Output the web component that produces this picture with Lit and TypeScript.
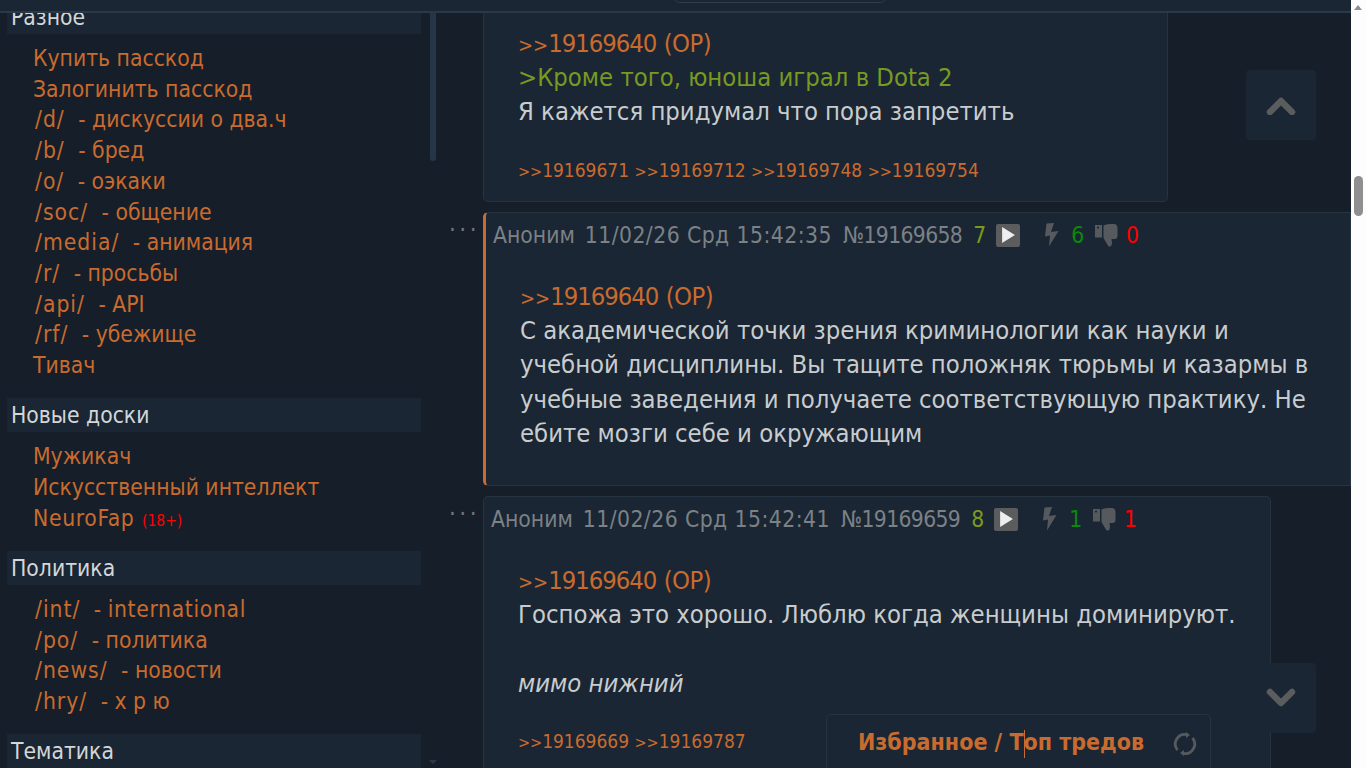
import { LitElement, html, css, svg } from 'lit';
import { customElement } from 'lit/decorators.js';

const groups = [
  { title: 'Разное', links: ['Купить пасскод', 'Залогинить пасскод', '/d/ - дискуссии о два.ч', '/b/ - бред', '/o/ - оэкаки', '/soc/ - общение', '/media/ - анимация', '/r/ - просьбы', '/api/ - API', '/rf/ - убежище', 'Тивач'] },
  { title: 'Новые доски', links: ['Мужикач', 'Искусственный интеллект', 'NeuroFap'] },
  { title: 'Политика', links: ['/int/ - international', '/po/ - политика', '/news/ - новости', '/hry/ - х р ю'] },
  { title: 'Тематика', links: [] },
];

const bolt = svg`<path d="M1.5.5L9 0 6 9l7.5-1L4 23.5l1-11-5 1z"/>`;
const thumb = svg`<path fill-rule="evenodd" d="M0 1h7v12.5H0zM3 2.5a1 1 0 1 0 .01 0z"/><path d="M8.5 1.5C11 0 14 0 19 0c2 0 3.5 1.500 3.500 4v8c0 2-1 3-3 3h-3l.5 4c0 3-2 4-3.500 3.500L8.500 14z"/>`;

@customElement('app-root')
export class AppRoot extends LitElement {
  static styles = css`
    :host {
      display: block;
      height: 768px;
      overflow: hidden;
      position: relative;
      background: #161f29;
      font-family: "DejaVu Sans Condensed", "DejaVu Sans", sans-serif;
      color: #c9ccce;
    }
    a { color: #c96b2e; text-decoration: none; }
    .layout { display: grid; grid-template-columns: 441px 1fr 15px; height: 768px; }
    .topbar {
      position: absolute; top: 0; left: 0; right: 15px; height: 11px;
      background: #1a2633; border-bottom: 2px solid #2a3847;
    }
    .topbar-tab {
      position: absolute; left: 674px; top: -8px; width: 210px; height: 9px;
      border: 1px solid #2f3d4c; border-radius: 6px;
    }
    .side { padding: 0 20px 0 7px; position: relative; overflow: hidden; }
    .side h3 {
      margin: 0; height: 34px; line-height: 34px; padding-left: 4px;
      font-size: 22.7px; font-weight: 400; background: #1a2633; color: #d4d6d8;
    }
    .side ul { list-style: none; margin: 0; padding: 9px 0 17.500px 26px; }
    .side li { font-size: 22.7px; line-height: 30.7px; white-space: nowrap; }
    .tag { margin: 0 7px 0 2px; letter-spacing: 1px; }
    .latin { letter-spacing: .65px; }
    .adult { color: #f00; font-size: 15.500px; line-height: 1; margin-left: 1px; }
    .side-thumb {
      position: absolute; left: 430px; top: 0; width: 6px; height: 161px;
      background: #253649; border-radius: 3px;
    }
    .side-arrow {
      position: absolute; left: 429px; top: 760px; width: 0; height: 0;
      border: 4px solid transparent; border-top: 4px solid #2b3a4b; border-bottom: 0;
    }
    .main { display: flex; flex-direction: column; gap: 10px; min-width: 0; }
    .row { display: flex; align-items: flex-start; }
    .dots {
      width: 42px; flex: none; margin-top: -1px; padding: 0 0 0 8px; box-sizing: border-box;
      color: #6f767c; font-size: 24px; line-height: 24px; letter-spacing: 3.500px;
    }
    .post {
      background: #1a2633; border: 1px solid #263442; border-radius: 5px;
      box-sizing: border-box; padding: 0 35px 32px 7px;
    }
    .first { height: 202px; width: 685px; border-top: 0; border-radius: 0 0 5px 5px; padding-top: 26px; margin-left: 42px; }
    .op { width: 868px; height: 274px; border-left: 3px solid #c96b2e; border-radius: 5px 0 0 5px; }
    .third { width: 788px; height: 400px; }
    .meta {
      display: flex; align-items: center; height: 44px;
      font-size: 22.7px; color: #7c8186; white-space: nowrap;
    }
    .date { margin-left: 10px; letter-spacing: .45px; }
    .num { margin-left: 11px; letter-spacing: -.65px; }
    .count { color: #7a9a1e; margin-left: 11px; }
    .play {
      width: 24px; height: 23px; background: #5a5c5e; border-radius: 2px; margin-left: 10px;
      display: flex; align-items: center; justify-content: center;
    }
    .play svg { fill: #eee; width: 13px; height: 16px; }
    .ico { fill: #565a5e; flex: none; }
    .bolt { width: 14px; height: 24px; margin-left: 25px; }
    .thumb { width: 23px; height: 23px; margin-left: 11px; }
    .g { color: #0a8a0a; margin-left: 12px; }
    .r { color: #f00; margin-left: 8px; }
    .body { padding: 22px 0 0 27px; }
    .first .body { padding-top: 0; }
    .body p { margin: 0; font-size: 25.400px; line-height: 34.200px; white-space: nowrap; }
    .gt { font-size: 20px; line-height: 1; }
    .ref { letter-spacing: -1px; }
    .op-mark { letter-spacing: -.5px; }
    .quote { color: #789922; }
    .replies { margin-top: 28.500px; font-size: 19px; line-height: 26px; color: #c96b2e; white-space: nowrap; }
    .replies .gt { font-size: 16px; }
    .float {
      position: absolute; left: 1246px; width: 70px; height: 70px;
      background: #1a2633; border-radius: 4px;
      display: flex; align-items: center; justify-content: center;
    }
    .float svg { width: 30px; height: 20px; fill: none; stroke: #5a5c5e; stroke-width: 6.500; stroke-linecap: round; stroke-linejoin: round; }
    .up { top: 70px; }
    .down { top: 663px; }
    .fav {
      position: absolute; left: 826px; top: 714px; width: 385px; height: 70px; box-sizing: border-box;
      background: #1a2633; border: 1px solid #263442; border-radius: 5px;
      display: flex; align-items: flex-start; padding: 10px 0 0 31px;
      font-size: 23px; font-weight: 700; line-height: 34px; color: #c96b2e; white-space: nowrap;
    }
    .caret { border-left: 1px solid #c96b2e; height: 28px; display: inline-block; vertical-align: middle; margin: 0 -1px 0 0; }
    .refresh { width: 26px; height: 26px; margin: 6px 0 0 28px; }
    .page-scroll { background: #fdfdfd; position: relative; }
    .page-thumb {
      position: absolute; left: 3px; top: 176px; width: 9px; height: 40px;
      background: #8f8f8f; border-radius: 5px;
    }
    .pa { position: absolute; left: 3px; width: 0; height: 0; border: 4.500px solid transparent; }
    .pa-up { top: 5px; border-top: 0; border-bottom: 5px solid #8f8f8f; }
    .pa-down { bottom: 6px; border-bottom: 0; border-top: 5px solid #8f8f8f; }
  `;

  private latin(t: string) {
    return /^[a-z]{4,}$/i.test(t) ? html`<span class="latin">${t}</span>` : t;
  }

  private linkText(l: string) {
    const i = l.indexOf(' - ');
    if (i < 0) return this.latin(l);
    return html`<span class="tag">${l.slice(0, i)}</span> - ${this.latin(l.slice(i + 3))}`;
  }

  private ref() {
    return html`<a href="#"><span class="gt">&gt;&gt;</span><span class="ref">19169640</span> <span class="op-mark">(OP)</span></a>`;
  }

  private meta(d: string, no: string, count: string, g: string, r: string) {
    return html`<div class="meta">
      <span>Аноним</span><span class="date">${d}</span><span class="num">${no}</span><span class="count">${count}</span>
      <div class="play"><svg viewBox="0 0 12 15"><path d="M0 0l12 7.500L0 15z"/></svg></div>
      <svg class="ico bolt" viewBox="0 0 14 24">${bolt}</svg>
      <span class="g">${g}</span>
      <svg class="ico thumb" viewBox="0 0 23 23">${thumb}</svg>
      <span class="r">${r}</span>
    </div>`;
  }

  private replies(nums: string[]) {
    return html`<div class="replies">${nums.map((n) => html`<span class="gt">&gt;&gt;</span>${n} `)}</div>`;
  }

  render() {
    return html`
      <div class="layout">
        <aside class="side">
          ${groups.map((g) => html`
            <h3>${g.title}</h3>
            <ul>${g.links.map((l) => html`<li><a href="#">${this.linkText(l)}</a>${l === 'NeuroFap' ? html` <span class="adult">(18+)</span>` : ''}</li>`)}</ul>
          `)}
          <div class="side-thumb"></div>
          <div class="side-arrow"></div>
        </aside>
        <main class="main">
          <article class="post first">
            <div class="body">
              <p>${this.ref()}</p>
              <p class="quote">&gt;Кроме того, юноша играл в Dota 2</p>
              <p>Я кажется придумал что пора запретить</p>
              ${this.replies(['19169671', '19169712', '19169748', '19169754'])}
            </div>
          </article>
          <div class="row">
            <div class="dots">...</div>
            <article class="post op">
              ${this.meta('11/02/26 Срд 15:42:35', '№19169658', '7', '6', '0')}
              <div class="body">
                <p>${this.ref()}</p>
                <p>С академической точки зрения криминологии как науки и<br>учебной дисциплины. Вы тащите положняк тюрьмы и казармы в<br>учебные заведения и получаете соответствующую практику. Не<br>ебите мозги себе и окружающим</p>
              </div>
            </article>
          </div>
          <div class="row">
            <div class="dots">...</div>
            <article class="post third">
              ${this.meta('11/02/26 Срд 15:42:41', '№19169659', '8', '1', '1')}
              <div class="body">
                <p>${this.ref()}</p>
                <p>Госпожа это хорошо. Люблю когда женщины доминируют.</p>
                <p>&nbsp;</p>
                <p><em>мимо нижний</em></p>
                ${this.replies(['19169669', '19169787'])}
              </div>
            </article>
          </div>
        </main>
        <div class="page-scroll">
          <div class="pa pa-up"></div>
          <div class="page-thumb"></div>
          <div class="pa pa-down"></div>
        </div>
      </div>
      <div class="topbar"><div class="topbar-tab"></div></div>
      <div class="float up"><svg viewBox="0 0 30 20"><path d="M4 17L15 6l11 11"/></svg></div>
      <div class="float down"><svg viewBox="0 0 30 20"><path d="M4 4l11 11L26 4"/></svg></div>
      <div class="fav">
        <span>Избранное / Т<span class="caret"></span>оп тредов</span>
        <svg class="refresh" viewBox="0 0 26 26">
          <path fill="none" stroke="#565a5e" stroke-width="2.800" d="M5.500 19A9.500 9.500 0 0 1 15 3.700M20.500 7A9.500 9.500 0 0 1 11 22.300"/>
          <path fill="#565a5e" d="M14 1l4 3-4 3zM12 19l-4 3 4 3z"/>
        </svg>
      </div>
    `;
  }
}
